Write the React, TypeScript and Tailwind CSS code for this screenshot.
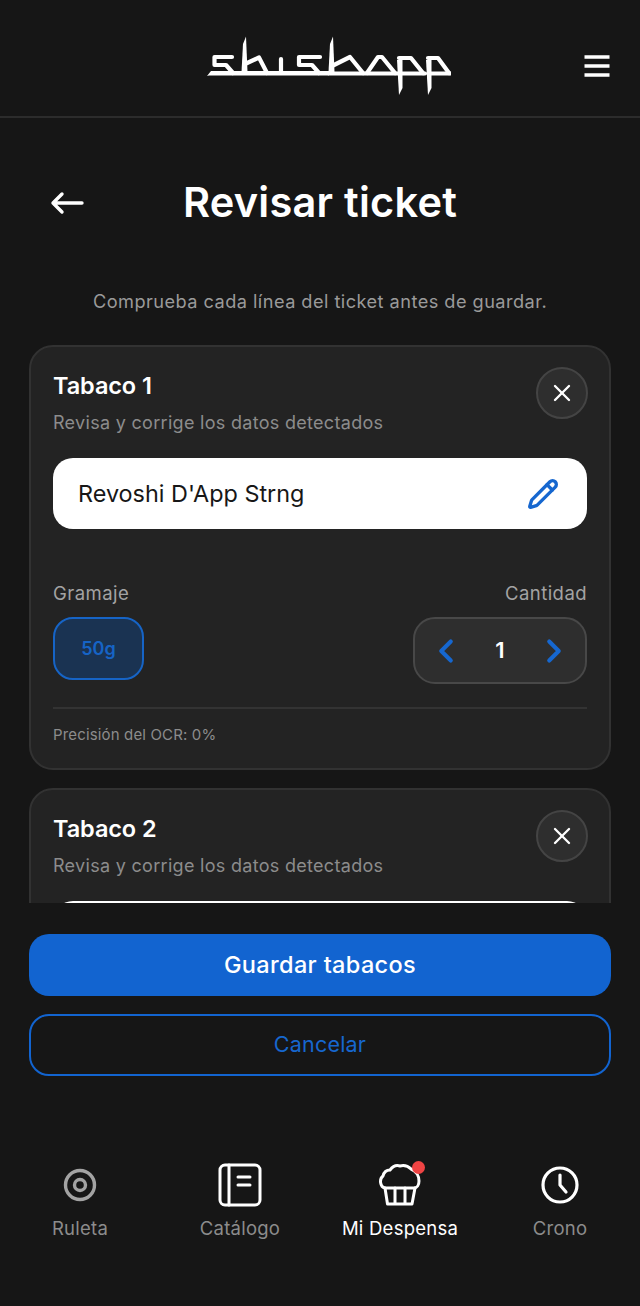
import { ChevronLeft, ChevronRight, Pencil, X } from 'lucide-react';

const font = 'font-["Inter","Liberation_Sans",sans-serif]';

function Logo() {
  return (
    <svg width="244" height="60" viewBox="0 0 244 60" fill="none" stroke="white" strokeWidth="4.2" strokeLinejoin="round" strokeLinecap="round" className="mt-[16px] ml-[18px]">
      {/* baseline, pointed at the left end */}
      <path d="M0 40L4 35H122V39.5H2Z" fill="white" stroke="none" />
      <path d="M122 37.5H218" />
      <path d="M222 37.5H243" />
      {/* s */}
      <path d="M25 21H7.5V29H19L26 37" />
      {/* h */}
      <path d="M34.5 36L36 8L39 0.5L40.5 36Z" fill="white" stroke="none" />
      <path d="M38 28L52 21.5L60 37" />
      {/* i */}
      <path d="M74 23V37" />
      {/* s */}
      <path d="M113 21H92V29H105L112 37" />
      {/* h */}
      <path d="M121.5 36L123 8L126 0.5L127.5 36Z" fill="white" stroke="none" />
      <path d="M125 30L143 21L156 37" />
      {/* a */}
      <path d="M160 37L171 21H175L188 37" />
      {/* p p */}
      <path d="M190 24L192 59L195.5 52L195.5 24Z" fill="white" stroke="none" />
      <path d="M192 22H204L216 37" />
      <path d="M219 24L221 59L224.5 52L224.5 24Z" fill="white" stroke="none" />
      <path d="M221 22H231L242 37" />
    </svg>
  );
}

function Card({ name }: { name: string }) {
  return (
    <section className="rounded-[24px] border-2 border-[#323232] bg-[#232323] px-[22px] pt-[22px] pb-[21px]">
      <div className="flex items-start justify-between">
        <div>
          <h2 className="text-[23.5px] leading-[34px] font-semibold tracking-[-0.1px] text-white">{name}</h2>
          <p className="mt-[3px] text-[18px] leading-[34px] tracking-[0.3px] text-[#8c8c8c]">Revisa y corrige los datos detectados</p>
        </div>
        <button type="button" className="-mt-[2px] -mr-px flex h-[52px] w-[52px] items-center justify-center rounded-full border-2 border-[#444444] bg-[#2e2e2e] text-white">
          <X className="h-[28px] w-[28px]" strokeWidth={2} />
        </button>
      </div>
      <div className="mt-[18px] flex h-[71px] items-center justify-between rounded-[20px] bg-white pr-[28px] pl-[25px]">
        <span className="pt-px text-[23.4px] text-[#171717]">Revoshi D'App Strng</span>
        <Pencil className="h-[32px] w-[32px] text-[#1667cf]" strokeWidth={2.5} />
      </div>
      <div className="mt-[50px] flex items-start justify-between">
        <div>
          <p className="text-[18.5px] leading-[28px] tracking-[0.45px] text-[#a3a3a3]">Gramaje</p>
          <div className="mt-[10px] flex h-[63px] w-[91px] items-center justify-center rounded-[20px] border-2 border-[#1664c6] bg-[#1a3352] text-[18px] font-semibold text-[#1664c6]">50g</div>
        </div>
        <div className="flex flex-col items-end">
          <p className="text-[18.5px] leading-[28px] tracking-[0.45px] text-[#a3a3a3]">Cantidad</p>
          <div className="mt-[10px] flex h-[67px] w-[174px] items-center justify-between rounded-[22px] border-2 border-[#484848] bg-[#2e2e2e] px-[12px]">
            <ChevronLeft className="h-[38px] w-[38px] text-[#1667cf]" strokeWidth={2.6} />
            <span className="text-[22px] font-semibold text-white">1</span>
            <ChevronRight className="h-[38px] w-[38px] text-[#1667cf]" strokeWidth={2.6} />
          </div>
        </div>
      </div>
      <div className="mt-[23px] border-t-2 border-[#333333] pt-[14px] text-[15px] leading-[24px] tracking-[0.15px] text-[#8c8c8c]">Precisión del OCR: 0%</div>
    </section>
  );
}

function NavItem({ label, active, children }: { label: string; active?: boolean; children: React.ReactNode }) {
  return (
    <div className={`flex w-[160px] flex-col items-center ${active ? 'text-white' : 'text-[#8c8c8c]'}`}>
      <div className="flex h-[46px] items-center justify-center">{children}</div>
      <span className="mt-[6px] text-[18.5px] leading-[28px] tracking-[0.25px]">{label}</span>
    </div>
  );
}

export default function App() {
  return (
    <div className={`flex h-[1306px] w-[640px] flex-col overflow-hidden bg-[#161616] text-white ${font}`}>
      <header className="relative flex h-[118px] shrink-0 items-center justify-center border-b-2 border-[#2c2c2c]">
        <Logo />
        <svg width="26" height="22" viewBox="0 0 26 22" fill="none" stroke="white" strokeWidth="3.6" className="absolute top-[55px] right-[30px]">
          <path d="M0.5 2H25.5M0.5 11H25.5M0.5 20H25.5" />
        </svg>
      </header>

      <div className="relative flex h-[170px] shrink-0 flex-col items-center">
        <svg width="34" height="24" viewBox="0 0 34 24" fill="none" stroke="white" strokeWidth="3.4" strokeLinecap="round" strokeLinejoin="round" className="absolute top-[73px] left-[50px]">
          <path d="M32 12H3M12 3L3 12L12 21" />
        </svg>
        <h1 className="mt-[60px] text-[41.5px] leading-[48px] font-semibold tracking-[0.25px]">Revisar ticket</h1>
        <p className="mt-[61px] text-[18.2px] leading-[28px] tracking-[0.45px] text-[#9a9a9a]">Comprueba cada línea del ticket antes de guardar.</p>
      </div>

      <main className="mt-[57px] flex h-[558px] shrink-0 flex-col gap-[18px] overflow-hidden px-[29px]">
        <Card name="Tabaco 1" />
        <Card name="Tabaco 2" />
      </main>

      <div className="mt-[31px] flex shrink-0 flex-col gap-[18px] px-[29px]">
        <button type="button" className="h-[62px] rounded-[20px] bg-[#1264d0] text-[23.5px] font-medium tracking-[0.35px] text-white">Guardar tabacos</button>
        <button type="button" className="h-[62px] rounded-[20px] border-2 border-[#1264d0] pb-[2px] text-[21.5px] tracking-[0.2px] text-[#1667cf]">Cancelar</button>
      </div>

      <nav className="mt-[86px] flex shrink-0">
        <NavItem label="Ruleta">
          <svg width="34" height="34" viewBox="0 0 34 34" fill="none" stroke="#a3a3a3" strokeWidth="3.4">
            <circle cx="17" cy="17" r="14.5" />
            <circle cx="17" cy="17" r="5.5" />
          </svg>
        </NavItem>
        <NavItem label="Catálogo">
          <svg width="44" height="44" viewBox="0 0 44 44" fill="none" stroke="white" strokeWidth="3" strokeLinecap="round">
            <rect x="2" y="2" width="40" height="40" rx="5" />
            <path d="M11 2V42M20 14H32M20 22H32" />
          </svg>
        </NavItem>
        <NavItem label="Mi Despensa" active>
          <div className="relative">
            <svg width="44" height="44" viewBox="0 0 44 44" fill="none" stroke="white" strokeWidth="3" strokeLinecap="round" strokeLinejoin="round">
              <path d="M7 25C2 24 1 16 5 13C6 9 9 7 12 7C15 3 19 2 22 3C26 2 30 3 33 6C38 8 41 13 41 18C41 22 39 25 36 25Z" />
              <path d="M7 25L9.5 41H34L37 25M17 25V41M27 25V41" />
            </svg>
            <span className="absolute -top-[2px] -right-[3px] h-[13px] w-[13px] rounded-full bg-[#ef4444]" />
          </div>
        </NavItem>
        <NavItem label="Crono">
          <svg width="40" height="40" viewBox="0 0 40 40" fill="none" stroke="white" strokeWidth="3.2" strokeLinecap="round" strokeLinejoin="round">
            <circle cx="20" cy="20" r="17" />
            <path d="M20 10V20L26 27" />
          </svg>
        </NavItem>
      </nav>
    </div>
  );
}
